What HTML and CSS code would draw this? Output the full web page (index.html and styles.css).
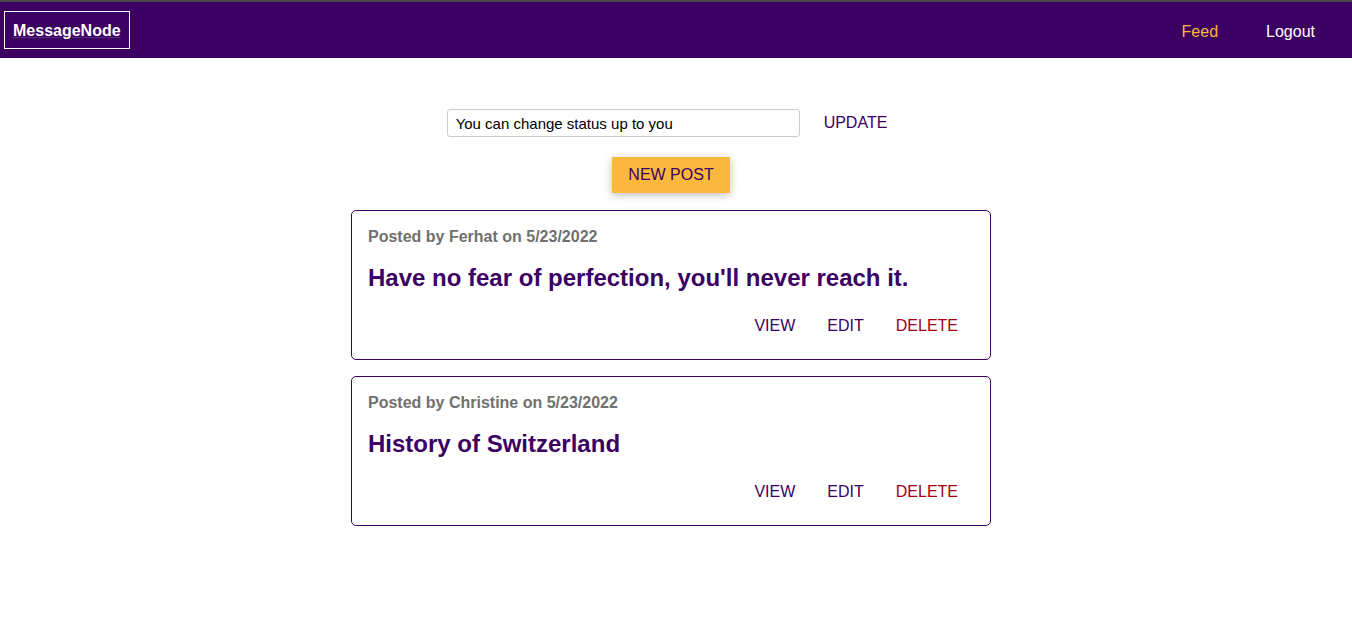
FILE: index.html
```html
<!DOCTYPE html>
<html>
<head>
<meta charset="utf-8">
<link rel="stylesheet" href="styles.css">
</head>
<body>
<div class="topline"></div>
<header class="header">
  <div class="logo"><a href="#">MessageNode</a></div>
  <nav class="nav">
    <a class="nav-link active" href="#">Feed</a>
    <a class="nav-link" href="#">Logout</a>
  </nav>
</header>
<main class="main">
  <section class="status">
    <input class="status-input" type="text" value="You can change status up to you">
    <button class="flat-btn">UPDATE</button>
  </section>
  <section class="new-post">
    <button class="raised-btn">NEW POST</button>
  </section>
  <section class="feed">
    <article class="post">
      <div class="meta">Posted by Ferhat on 5/23/2022</div>
      <h1 class="title">Have no fear of perfection, you'll never reach it.</h1>
      <div class="actions">
        <button class="flat-btn">VIEW</button>
        <button class="flat-btn">EDIT</button>
        <button class="flat-btn danger">DELETE</button>
      </div>
    </article>
    <article class="post">
      <div class="meta">Posted by Christine on 5/23/2022</div>
      <h1 class="title">History of Switzerland</h1>
      <div class="actions">
        <button class="flat-btn">VIEW</button>
        <button class="flat-btn">EDIT</button>
        <button class="flat-btn danger">DELETE</button>
      </div>
    </article>
  </section>
</main>
</body>
</html>
```
FILE: styles.css
```css
* { box-sizing: border-box; }
body {
  margin: 0;
  font-family: "Liberation Sans", Arial, sans-serif;
  background: #fff;
}
.topline { height: 2px; background: #4a4a4a; }
.header {
  height: 56px;
  background: #3b0062;
  display: flex;
  align-items: center;
  justify-content: space-between;
  padding: 0 4px;
}
.logo {
  border: 1px solid #fff;
  height: 38px;
  padding: 1px 8px 0;
  display: flex;
  align-items: center;
}
.logo a {
  color: #fff;
  font-weight: bold;
  font-size: 16px;
  text-decoration: underline;
  text-decoration-color: #5a2b86;
}
.nav { display: flex; padding-right: 33px; padding-top: 3px; }
.nav-link {
  color: #fff;
  text-decoration: none;
  font-size: 16px;
  margin-left: 48px;
}
.nav-link.active { color: #fab83f; }
.main {
  width: 640px;
  margin: 0 auto;
  position: relative;
  left: -5px;
  padding-top: 47px;
}
.status {
  display: flex;
  align-items: center;
  justify-content: center;
  padding-left: 8px;
}
.status-input {
  width: 353px;
  height: 28px;
  border: 1px solid #ccc;
  border-radius: 3px;
  padding: 0 8px;
  font: 15px "Liberation Sans", Arial, sans-serif;
  color: #000;
  margin-right: 8px;
}
.flat-btn {
  background: none;
  border: none;
  font: 16px "Liberation Sans", Arial, sans-serif;
  color: #3b0062;
  padding: 8px 16px;
  line-height: 20px;
  cursor: pointer;
}
.flat-btn.danger { color: #a1000f; }
.new-post {
  display: flex;
  justify-content: center;
  margin-top: 16px;
}
.raised-btn {
  background: #fab83f;
  color: #3b0062;
  border: none;
  font: 16px "Liberation Sans", Arial, sans-serif;
  height: 36px;
  padding: 0 16px;
  box-shadow: 0 2px 8px rgba(0,0,0,0.26);
}
.feed {
  margin-top: 17px;
  display: flex;
  flex-direction: column;
  gap: 16px;
}
.post {
  border: 1px solid #3b0062;
  border-radius: 5px;
  padding: 16px;
  height: 150px;
}
.meta {
  color: #707070;
  font-weight: bold;
  font-size: 16px;
  line-height: 18px;
  padding-top: 1px;
}
.title {
  color: #3b0062;
  font-size: 24px;
  line-height: 28px;
  margin: 18px 0 0;
}
.actions {
  display: flex;
  justify-content: flex-end;
  margin-top: 16px;
}
```
